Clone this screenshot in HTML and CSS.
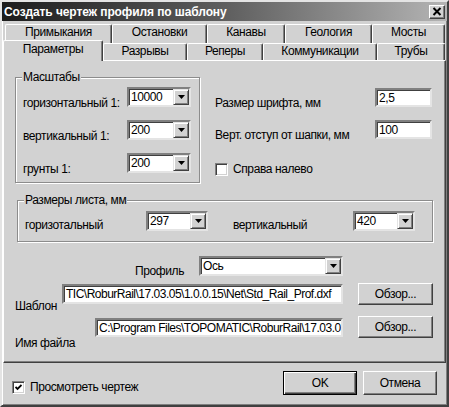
FILE: index.html
```html
<!DOCTYPE html>
<html lang="ru">
<head>
    <meta charset="UTF-8">
    <title>Создать чертеж профиля по шаблону</title>
    <link rel="stylesheet" href="styles.css">
</head>
<body>
    <div class="window">
        <div class="titlebar">
            <span class="title">Создать чертеж профиля по шаблону</span>
            <span class="close-btn">
                <svg width="10" height="9" viewBox="0 0 10 9"><path d="M1.5 1 L8.5 8 M8.5 1 L1.5 8" stroke="#000" stroke-width="2"/></svg>
            </span>
        </div>

        <div class="tabs">
            <div class="tab-row back">
                <div class="tab t-prim">Примыкания</div>
                <div class="tab t-ost">Остановки</div>
                <div class="tab t-kan">Канавы</div>
                <div class="tab t-geo">Геология</div>
                <div class="tab t-most">Мосты</div>
            </div>
            <div class="tab-row front">
                <div class="tab active t-par">Параметры</div>
                <div class="tab t-razr">Разрывы</div>
                <div class="tab t-rep">Реперы</div>
                <div class="tab t-kom">Коммуникации</div>
                <div class="tab t-trub">Трубы</div>
            </div>
        </div>

        <div class="panel">
            <div class="top-section">
                <fieldset class="group scales">
                    <legend>Масштабы</legend>
                    <div class="scale-grid">
                        <span class="lbl">горизонтальный 1:</span>
                        <div class="combo">
                            <span class="combo-value">10000</span>
                            <span class="combo-btn"><svg width="7" height="4" viewBox="0 0 7 4"><path d="M0 0 H7 L3.5 4 Z" fill="#000"/></svg></span>
                        </div>
                        <span class="lbl">вертикальный 1:</span>
                        <div class="combo">
                            <span class="combo-value">200</span>
                            <span class="combo-btn"><svg width="7" height="4" viewBox="0 0 7 4"><path d="M0 0 H7 L3.5 4 Z" fill="#000"/></svg></span>
                        </div>
                        <span class="lbl">грунты 1:</span>
                        <div class="combo">
                            <span class="combo-value">200</span>
                            <span class="combo-btn"><svg width="7" height="4" viewBox="0 0 7 4"><path d="M0 0 H7 L3.5 4 Z" fill="#000"/></svg></span>
                        </div>
                    </div>
                </fieldset>

                <div class="right-col">
                    <div class="field-row">
                        <span class="lbl">Размер шрифта, мм</span>
                        <div class="text-box small">2,5</div>
                    </div>
                    <div class="field-row second">
                        <span class="lbl">Верт. отступ от шапки, мм</span>
                        <div class="text-box small">100</div>
                    </div>
                    <div class="check-row rtl-check">
                        <span class="checkbox"></span>
                        <span>Справа налево</span>
                    </div>
                </div>
            </div>

            <fieldset class="group sheet">
                <legend>Размеры листа, мм</legend>
                <div class="sheet-grid">
                    <span class="lbl">горизотальный</span>
                    <div class="combo">
                        <span class="combo-value">297</span>
                        <span class="combo-btn"><svg width="7" height="4" viewBox="0 0 7 4"><path d="M0 0 H7 L3.5 4 Z" fill="#000"/></svg></span>
                    </div>
                    <span class="lbl second-lbl">вертикальный</span>
                    <div class="combo">
                        <span class="combo-value">420</span>
                        <span class="combo-btn"><svg width="7" height="4" viewBox="0 0 7 4"><path d="M0 0 H7 L3.5 4 Z" fill="#000"/></svg></span>
                    </div>
                </div>
            </fieldset>

            <div class="profile-row">
                <span class="lbl">Профиль</span>
                <div class="combo wide">
                    <span class="combo-value">Ось</span>
                    <span class="combo-btn"><svg width="7" height="4" viewBox="0 0 7 4"><path d="M0 0 H7 L3.5 4 Z" fill="#000"/></svg></span>
                </div>
            </div>

            <div class="path-row template-row">
                <span class="lbl">Шаблон</span>
                <div class="text-box path">TIC\RoburRail\17.03.05\1.0.0.15\Net\Std_Rail_Prof.dxf</div>
                <div class="btn">Обзор...</div>
            </div>

            <div class="path-row file-row">
                <span class="lbl">Имя файла</span>
                <div class="text-box path">C:\Program Files\TOPOMATIC\RoburRail\17.03.0</div>
                <div class="btn">Обзор...</div>
            </div>
        </div>

        <div class="footer">
            <div class="check-row preview-check">
                <span class="checkbox">
                    <svg width="7" height="7" viewBox="0 0 7 7"><path d="M0.5 3 L2.5 5 L6.5 1" stroke="#000" stroke-width="1.8" fill="none"/></svg>
                </span>
                <span>Просмотреть чертеж</span>
            </div>
            <div class="btn default">OK</div>
            <div class="btn">Отмена</div>
        </div>
    </div>
</body>
</html>
```

FILE: styles.css
```css
* {
    box-sizing: border-box;
}

body {
    margin: 0;
    background-color: #d2d2d2;
    font-family: "Liberation Sans", Arial, sans-serif;
    font-size: 12px;
    letter-spacing: -0.4px;
    color: #000;
}

.window {
    width: 449px;
    height: 407px;
    background-color: #d2d2d2;
    border: 2px solid;
    border-color: #e4e4e4 #404040 #404040 #e4e4e4;
    box-shadow: inset 1px 1px 0 #fff, inset -1px -1px 0 #808080;
}

/* title bar */

.titlebar {
    height: 19px;
    display: flex;
    align-items: center;
    justify-content: space-between;
    padding: 0 2px 0 2px;
    background: linear-gradient(to right, #1c1c1c, #5e5e5e 50%, #b4b4b4);
}

.title {
    color: #fff;
    font-weight: bold;
    font-size: 12px;
    letter-spacing: -0.1px;
}

.close-btn {
    width: 16px;
    height: 14px;
    display: flex;
    align-items: center;
    justify-content: center;
    background-color: #d2d2d2;
    border: 1px solid;
    border-color: #fff #404040 #404040 #fff;
    box-shadow: inset -1px -1px 0 #808080;
}

/* tabs */

.tabs {
    margin-top: 3px;
}

.tab-row {
    display: flex;
}

.tab-row.back {
    height: 19px;
    padding-left: 3px;
}

.tab-row.front {
    height: 20px;
    margin-top: -3px;
    padding-left: 1px;
}

.tab {
    height: 17px;
    border: 1px solid;
    border-bottom: none;
    border-color: #fff #404040 #404040 #fff;
    border-radius: 2px 2px 0 0;
    box-shadow: inset -1px 0 0 #808080;
    background-color: #d2d2d2;
    text-align: center;
    line-height: 15px;
    white-space: nowrap;
}

.tab-row.back .tab {
    height: 19px;
}

.tab-row.front .tab {
    margin-top: 3px;
}

.tab-row.front .tab.active {
    height: 21px;
    margin-top: 0;
    margin-bottom: -1px;
    position: relative;
    z-index: 1;
    line-height: 16px;
}

.t-prim { width: 107px; }
.t-ost { width: 95px; }
.t-kan { width: 78px; }
.t-geo { width: 87px; }
.t-most { width: 73px; }

.t-par { width: 100px; }
.t-razr { width: 84px; }
.t-rep { width: 76px; }
.t-kom { width: 114px; }
.t-trub { width: 68px; }

/* panel */

.panel {
    height: 303px;
    margin: 0 1px;
    border: 1px solid;
    border-color: #fff #404040 #404040 #fff;
    box-shadow: inset -1px -1px 0 #808080;
}

.lbl {
    white-space: nowrap;
    line-height: 13px;
}

.top-section {
    display: flex;
    margin-top: 10px;
}

.group {
    margin: 0;
    padding: 3px 0 9px 7px;
    border: 1px solid #8c8c8c;
    box-shadow: inset 1px 1px 0 #fff, 1px 1px 0 #fff;
    min-width: 0;
}

.group legend {
    padding: 0 1px;
    margin-left: -1px;
    line-height: 13px;
    background-color: #d2d2d2;
}

.scales {
    width: 185px;
    margin-left: 11px;
}

.scale-grid {
    display: grid;
    grid-template-columns: 104px 64px;
    grid-auto-rows: 20px;
    row-gap: 13px;
}

.scale-grid .lbl {
    padding-top: 10px;
}

.combo {
    height: 20px;
    display: flex;
    background-color: #fff;
    border: 2px solid;
    border-color: #808080 #e4e4e4 #e4e4e4 #808080;
    box-shadow: inset 1px 1px 0 #404040;
}

.combo-value {
    flex: 1;
    padding-left: 2px;
    padding-top: 1px;
    line-height: 14px;
    white-space: nowrap;
    overflow: hidden;
}

.combo-btn {
    width: 16px;
    height: 16px;
    display: flex;
    align-items: center;
    justify-content: center;
    background-color: #d2d2d2;
    border: 1px solid;
    border-color: #e4e4e4 #404040 #404040 #e4e4e4;
    box-shadow: inset 1px 1px 0 #fff, inset -1px -1px 0 #808080;
}

.right-col {
    width: 217px;
    margin-left: 15px;
    padding-top: 17px;
}

.field-row {
    height: 19px;
    display: flex;
    justify-content: space-between;
}

.field-row .lbl {
    padding-top: 9px;
}

.field-row.second {
    margin-top: 13px;
}

.text-box {
    height: 20px;
    background-color: #fff;
    border: 2px solid;
    border-color: #808080 #e4e4e4 #e4e4e4 #808080;
    box-shadow: inset 1px 1px 0 #404040;
    padding: 1px 0 0 2px;
    line-height: 14px;
    white-space: nowrap;
    overflow: hidden;
}

.text-box.small {
    width: 57px;
    height: 19px;
}

.check-row {
    display: flex;
    align-items: center;
    white-space: nowrap;
}

.rtl-check {
    margin-top: 23px;
}

.checkbox {
    width: 13px;
    height: 13px;
    margin-right: 5px;
    display: flex;
    align-items: center;
    justify-content: center;
    background-color: #fff;
    border: 1px solid;
    border-color: #808080 #fff #fff #808080;
    box-shadow: inset 1px 1px 0 #404040, inset -1px -1px 0 #d2d2d2;
}

/* sheet size */

.sheet {
    width: 416px;
    margin-top: 11px;
    margin-left: 13px;
    padding-top: 4px;
    padding-bottom: 10px;
}

.sheet-grid {
    display: grid;
    grid-template-columns: 121px 62px 145px 62px;
    grid-auto-rows: 20px;
}

.sheet-grid .lbl {
    padding-top: 8px;
}

.sheet-grid .second-lbl {
    padding-left: 25px;
}

/* profile and paths */

.profile-row {
    display: flex;
    margin-top: 14px;
}

.profile-row .lbl {
    width: 64px;
    margin-left: 131px;
    padding-top: 9px;
}

.combo.wide {
    width: 144px;
}

.path-row {
    display: flex;
    height: 22px;
}

.path-row .lbl {
    margin-left: 11px;
}

.template-row {
    margin-top: 5px;
}

.template-row .lbl {
    width: 47px;
    padding-top: 17px;
}

.file-row {
    margin-top: 11px;
}

.file-row .lbl {
    width: 80px;
    padding-top: 21px;
}

.text-box.path {
    margin-top: 1px;
    flex: none;
    letter-spacing: -0.5px;
}

.template-row .text-box.path {
    width: 281px;
}

.file-row .text-box.path {
    width: 248px;
    margin-top: 2px;
    height: 19px;
}

.btn {
    width: 75px;
    height: 22px;
    margin-left: 15px;
    display: flex;
    align-items: center;
    justify-content: center;
    background-color: #d2d2d2;
    border: 1px solid;
    border-color: #fff #404040 #404040 #fff;
    box-shadow: inset -1px -1px 0 #808080;
}

/* footer */

.footer {
    display: flex;
    align-items: flex-start;
    padding: 8px 10px 0 10px;
}

.preview-check {
    margin-top: 9px;
    margin-right: auto;
}

.footer .btn {
    width: 74px;
    height: 24px;
    margin-left: 6px;
}

.footer .btn.default {
    border-color: #000;
    box-shadow: inset 1px 1px 0 #fff, inset -1px -1px 0 #404040, inset -2px -2px 0 #808080;
}
```
